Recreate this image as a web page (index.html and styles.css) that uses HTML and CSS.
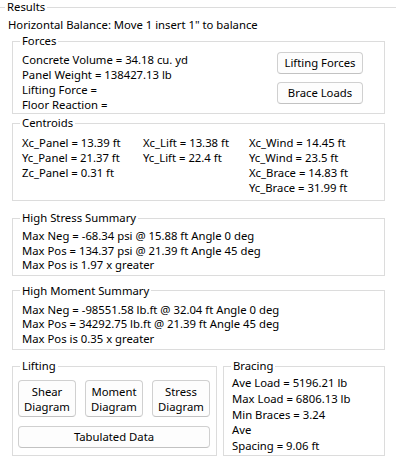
FILE: index.html
```html
<!DOCTYPE html>
<html>
<head>
<meta charset="utf-8">
<link rel="stylesheet" href="styles.css">
</head>
<body>
<fieldset class="results">
  <legend class="results-title">Results</legend>
  <div class="balance">Horizontal Balance: Move 1 insert 1" to balance</div>

  <fieldset class="group forces">
    <legend>Forces</legend>
    <div class="forces-body">
      <div class="lines">
        <div>Concrete Volume = 34.18 cu. yd</div>
        <div>Panel Weight = 138427.13 lb</div>
        <div>Lifting Force =</div>
        <div>Floor Reaction =</div>
      </div>
      <div class="force-btns">
        <button class="btn">Lifting Forces</button>
        <button class="btn">Brace Loads</button>
      </div>
    </div>
  </fieldset>

  <fieldset class="group centroids">
    <legend>Centroids</legend>
    <div class="centroid-body">
      <div class="col c1">
        <div>Xc_Panel = 13.39 ft</div>
        <div>Yc_Panel = 21.37 ft</div>
        <div>Zc_Panel = 0.31 ft</div>
      </div>
      <div class="col c2">
        <div>Xc_Lift = 13.38 ft</div>
        <div>Yc_Lift = 22.4 ft</div>
      </div>
      <div class="col c3">
        <div>Xc_Wind = 14.45 ft</div>
        <div>Yc_Wind = 23.5 ft</div>
        <div>Xc_Brace = 14.83 ft</div>
        <div>Yc_Brace = 31.99 ft</div>
      </div>
    </div>
  </fieldset>

  <fieldset class="group stress">
    <legend>High Stress Summary</legend>
    <div class="summary-body">
      <div>Max Neg = -68.34 psi @ 15.88 ft Angle 0 deg</div>
      <div>Max Pos = 134.37 psi @ 21.39 ft Angle 45 deg</div>
      <div>Max Pos is 1.97 x greater</div>
    </div>
  </fieldset>

  <fieldset class="group moment">
    <legend>High Moment Summary</legend>
    <div class="summary-body">
      <div>Max Neg = -98551.58 lb.ft @ 32.04 ft Angle 0 deg</div>
      <div>Max Pos = 34292.75 lb.ft @ 21.39 ft Angle 45 deg</div>
      <div>Max Pos is 0.35 x greater</div>
    </div>
  </fieldset>

  <div class="bottom-row">
    <fieldset class="group lifting">
      <legend>Lifting</legend>
      <div class="lifting-body">
        <div class="diagram-btns">
          <button class="btn tall">Shear<br>Diagram</button>
          <button class="btn tall">Moment<br>Diagram</button>
          <button class="btn tall">Stress<br>Diagram</button>
        </div>
        <button class="btn wide">Tabulated Data</button>
      </div>
    </fieldset>
    <fieldset class="group bracing">
      <legend>Bracing</legend>
      <div class="bracing-body">
        <div>Ave Load = 5196.21 lb</div>
        <div>Max Load = 6806.13 lb</div>
        <div>Min Braces = 3.24</div>
        <div>Ave</div>
        <div>Spacing = 9.06 ft</div>
      </div>
    </fieldset>
  </div>
</fieldset>
</body>
</html>
```

FILE: styles.css
```css
html, body {
  margin: 0;
  padding: 0;
  background: #ffffff;
  overflow: hidden;
}

body {
  font-family: "Segoe UI", "Noto Sans", "Open Sans", sans-serif;
  font-size: 11.3px;
  color: #000000;
  width: 396px;
  height: 476px;
}

fieldset {
  margin: 0;
  padding: 0;
  border: 1px solid #dcdcdc;
  min-width: 0;
}

legend {
  line-height: 14px;
  height: 14px;
  padding: 0 2px;
  margin-left: 7px;
}

.results {
  width: 397px;
  margin-left: -1px;
  height: 476px;
  padding: 0 0 0 12px;
  box-sizing: border-box;
  border-right: none;
  border-bottom: none;
}

.results > .results-title {
  margin-left: -7px;
}

.balance {
  margin-left: -4px;
  margin-top: 3px;
  line-height: 15px;
  height: 15px;
}

.group {
  width: 373px;
  box-sizing: border-box;
}

.forces {
  margin-top: 2px;
}

.forces-body {
  display: flex;
  justify-content: space-between;
  padding: 4px 21px 1px 9px;
}

.lines > div {
  line-height: 15px;
  height: 15px;
}

.force-btns {
  display: flex;
  flex-direction: column;
  gap: 8px;
}

.btn {
  font: inherit;
  color: #000;
  background: #fdfdfd;
  border: 1px solid #d0d0d0;
  border-bottom-color: #c2c2c2;
  border-radius: 4px;
  padding: 0;
  margin: 0;
  box-sizing: border-box;
  line-height: 14px;
}

.force-btns .btn {
  width: 86px;
  height: 22px;
}

.centroids {
  margin-top: 2px;
}

.centroid-body {
  display: flex;
  padding: 5px 0 5px 9px;
}

.col > div {
  line-height: 15px;
  height: 15px;
  white-space: nowrap;
}

.c1 { width: 121px; }
.c2 { width: 106px; }

.stress {
  margin-top: 10px;
}

.summary-body {
  padding: 4px 0 2px 9px;
}

.summary-body > div {
  line-height: 14.5px;
  height: 14.5px;
  white-space: nowrap;
}

.moment {
  margin-top: 8px;
}

.moment .summary-body {
  padding: 5px 0 3px 9px;
}

.bottom-row {
  display: flex;
  gap: 6px;
  margin-top: 9px;
  width: 373px;
}

.bottom-row .group {
  width: auto;
}

.lifting {
  width: 205px;
  flex: 0 0 205px;
}

.bracing {
  flex: 1 1 auto;
}

.lifting-body {
  padding: 7px 5px 7px 5px;
  display: flex;
  flex-direction: column;
  gap: 9px;
}

.diagram-btns {
  display: flex;
  gap: 9px;
}

.btn.tall {
  width: 58px;
  height: 37px;
  line-height: 15px;
}

.btn.wide {
  width: 192px;
  height: 22px;
}

.bracing-body {
  padding: 2px 0 0 8px;
}

.bracing-body > div {
  line-height: 15.8px;
  height: 15.8px;
  white-space: nowrap;
}
```
